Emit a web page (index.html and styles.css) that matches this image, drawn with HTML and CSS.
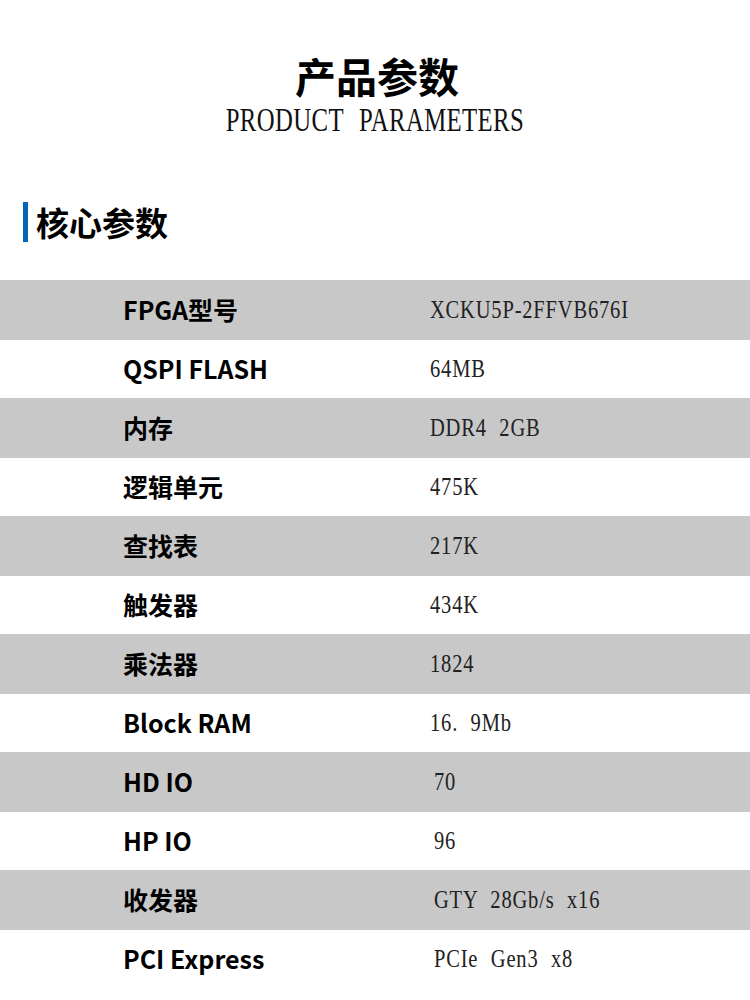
FILE: index.html
```html
<!DOCTYPE html>
<html lang="zh-CN">
<head>
<meta charset="utf-8">
<title>产品参数</title>
<link rel="stylesheet" href="styles.css">
</head>
<body>
<div class="page">
  <header class="hero">
    <h1 class="title">产品参数</h1>
    <p class="subtitle"><span>PRODUCT PARAMETERS</span></p>
  </header>

  <h2 class="section-title">核心参数</h2>

  <div class="spec-table">
    <div class="row"><div class="label">FPGA型号</div><div class="value"><span>XCKU5P-2FFVB676I</span></div></div>
    <div class="row"><div class="label">QSPI FLASH</div><div class="value"><span>64MB</span></div></div>
    <div class="row"><div class="label">内存</div><div class="value"><span>DDR4 2GB</span></div></div>
    <div class="row"><div class="label">逻辑单元</div><div class="value"><span>475K</span></div></div>
    <div class="row"><div class="label">查找表</div><div class="value"><span>217K</span></div></div>
    <div class="row"><div class="label">触发器</div><div class="value"><span>434K</span></div></div>
    <div class="row"><div class="label">乘法器</div><div class="value"><span>1824</span></div></div>
    <div class="row"><div class="label">Block RAM</div><div class="value"><span>16. 9Mb</span></div></div>
    <div class="row"><div class="label">HD IO</div><div class="value value-shift"><span>70</span></div></div>
    <div class="row"><div class="label">HP IO</div><div class="value value-shift"><span>96</span></div></div>
    <div class="row"><div class="label">收发器</div><div class="value value-shift"><span>GTY 28Gb/s x16</span></div></div>
    <div class="row"><div class="label">PCI Express</div><div class="value value-shift"><span>PCIe Gen3 x8</span></div></div>
  </div>
</div>
</body>
</html>
```

FILE: styles.css
```css
html, body {
  margin: 0;
  padding: 0;
  background: #ffffff;
}

.page {
  width: 750px;
  font-family: "Noto Sans CJK SC", "Noto Sans", sans-serif;
  color: #111111;
}

.hero {
  padding-top: 51px;
  text-align: center;
}

.title {
  margin: 0;
  font-family: "Noto Sans CJK SC", sans-serif;
  font-weight: 700;
  font-size: 41px;
  line-height: 48px;
  color: #000000;
  padding-left: 4px;
}

.subtitle {
  margin: 0;
  height: 41px;
  font-family: "Liberation Serif", serif;
  font-size: 33px;
  line-height: 42px;
  color: #111111;
}

.subtitle span {
  display: inline-block;
  transform: scaleX(0.75);
  transform-origin: center center;
  letter-spacing: 0.5px;
  word-spacing: 12px;
  white-space: nowrap;
}

.section-title {
  margin: 62px 0 0 23px;
  height: 40px;
  display: flex;
  align-items: center;
  gap: 8px;
  font-family: "Noto Sans CJK SC", sans-serif;
  font-weight: 700;
  font-size: 33px;
  line-height: 40px;
  color: #000000;
}

.section-title::before {
  content: "";
  width: 5px;
  height: 40px;
  background: #0a64b4;
}

.spec-table {
  margin-top: 38px;
}

.row {
  display: grid;
  grid-template-columns: 307px 1fr;
  align-items: center;
  padding-left: 123px;
  height: 58px;
  background: #ffffff;
}

.row:nth-child(odd) {
  height: 60px;
  background: #c8c8c8;
}

.label {
  font-family: "Noto Sans CJK SC", sans-serif;
  font-weight: 700;
  font-size: 25px;
  line-height: 30px;
  padding-bottom: 3px;
  color: #000000;
  white-space: nowrap;
}

.value {
  font-family: "Liberation Serif", serif;
  font-size: 25px;
  line-height: 30px;
  color: #222222;
  white-space: nowrap;
}

.value-shift {
  padding-left: 4px;
}

.value span {
  display: inline-block;
  transform: scaleX(0.82);
  transform-origin: left center;
  letter-spacing: 1px;
  word-spacing: 8px;
}
```
